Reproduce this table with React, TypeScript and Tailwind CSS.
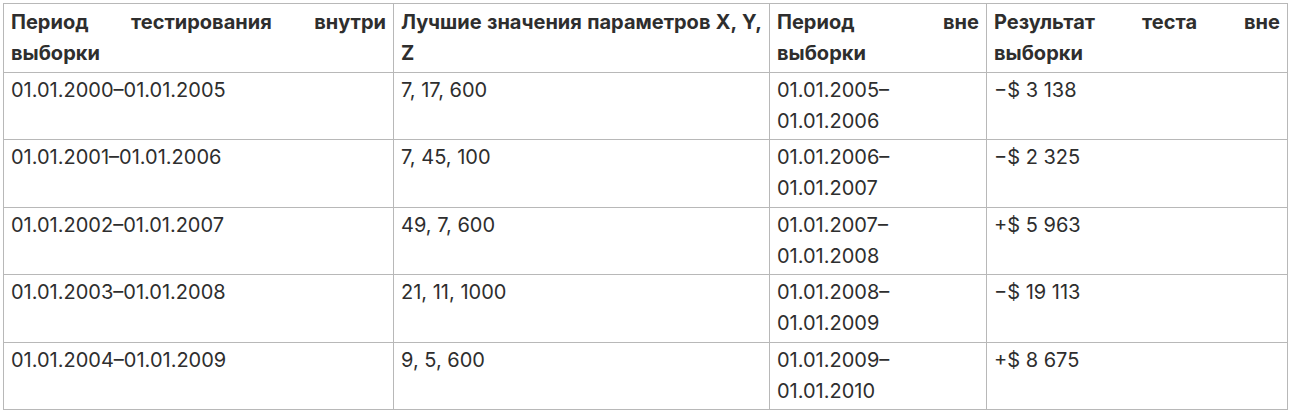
import React from "react";

const rows = [
  ["01.01.2000–01.01.2005", "7, 17, 600", "01.01.2005–01.01.2006", "−$ 3 138"],
  ["01.01.2001–01.01.2006", "7, 45, 100", "01.01.2006–01.01.2007", "−$ 2 325"],
  ["01.01.2002–01.01.2007", "49, 7, 600", "01.01.2007–01.01.2008", "+$ 5 963"],
  ["01.01.2003–01.01.2008", "21, 11, 1000", "01.01.2008–01.01.2009", "−$ 19 113"],
  ["01.01.2004–01.01.2009", "9, 5, 600", "01.01.2009–01.01.2010", "+$ 8 675"],
];

const headers = [
  "Период тестирования внутри выборки",
  "Лучшие значения параметров X, Y, Z",
  "Период вне выборки",
  "Результат теста вне выборки",
];

export default function App() {
  return (
    <div className="bg-white w-[1290px] h-[414px] pt-[3px] pl-[3px]" style={{ fontFamily: "Inter, 'Noto Sans', sans-serif" }}>
      <table className="border-collapse table-fixed w-[1284px] text-[20px] leading-[31.25px] text-[#2e2e2e]">
        <colgroup>
          <col className="w-[390px]" />
          <col className="w-[376px]" />
          <col className="w-[217px]" />
          <col className="w-[301px]" />
        </colgroup>
        <thead>
          <tr>
            {headers.map((h, i) => (
              <th
                key={i}
                className="border border-[#b8b8b8] px-[7px] py-[2.5px] font-bold text-justify align-top"
              >
                {h}
              </th>
            ))}
          </tr>
        </thead>
        <tbody>
          {rows.map((r, i) => (
            <tr key={i}>
              {r.map((c, j) => (
                <td key={j} className="border border-[#b8b8b8] px-[7px] py-[2px] align-top text-left">
                  {c}
                </td>
              ))}
            </tr>
          ))}
        </tbody>
      </table>
    </div>
  );
}
